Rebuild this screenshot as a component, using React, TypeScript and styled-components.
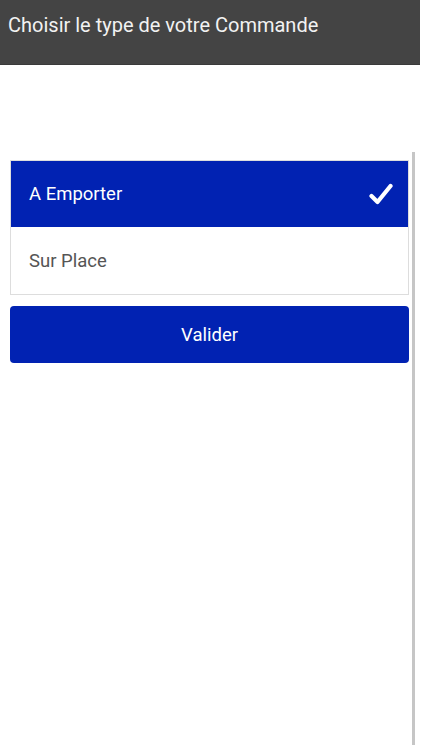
import React, { useState } from "react";
import styled, { createGlobalStyle } from "styled-components";

const GlobalStyle = createGlobalStyle`
  html, body {
    margin: 0;
    padding: 0;
    background: #ffffff;
  }
  body {
    font-family: Roboto, "Noto Sans", "Liberation Sans", sans-serif;
  }
`;

const Page = styled.div`
  width: 420px;
  height: 750px;
  background: #ffffff;
  display: flex;
  flex-direction: column;
`;

const Header = styled.header`
  height: 65px;
  background: #444444;
  display: flex;
  align-items: flex-start;
  padding: 12px 0 0 8px;
  box-sizing: border-box;
  border-bottom: 1px solid #3a3a3a;
`;

const Title = styled.h1`
  margin: 0;
  font-size: 20px;
  font-weight: 400;
  color: #f2f2f2;
  line-height: 26px;
`;

const Body = styled.div`
  margin-top: 87px;
  height: 593px;
  display: flex;
`;

const Content = styled.div`
  width: 410px;
  padding: 8px 0 0 10px;
  box-sizing: border-box;
  display: flex;
  flex-direction: column;
  gap: 11px;
`;

const ScrollBar = styled.div`
  width: 3px;
  margin-left: 2px;
  background: #c6c6c6;
`;

const List = styled.ul`
  list-style: none;
  margin: 0;
  padding: 0;
  border: 1px solid #dddddd;
  width: 399px;
  box-sizing: border-box;
`;

const Item = styled.li<{ $selected: boolean }>`
  height: 66px;
  display: flex;
  align-items: center;
  justify-content: space-between;
  padding: 0 15px 0 18px;
  font-size: 18.5px;
  color: ${(p) => (p.$selected ? "#ffffff" : "#555555")};
  background: ${(p) => (p.$selected ? "#0122b2" : "#ffffff")};
  cursor: pointer;

  & + & {
    height: 67px;
  }
`;

const Check = styled.svg`
  width: 24px;
  height: 22px;
`;

const Button = styled.button`
  width: 399px;
  height: 57px;
  border: none;
  border-radius: 4px;
  background: #0122b2;
  color: #ffffff;
  font-family: inherit;
  font-size: 18.5px;
  cursor: pointer;
`;

const options = ["A Emporter", "Sur Place"];

export default function App() {
  const [selected, setSelected] = useState(0);
  return (
    <>
      <GlobalStyle />
      <Page>
        <Header>
          <Title>Choisir le type de votre Commande</Title>
        </Header>
        <Body>
          <Content>
            <List>
              {options.map((label, i) => (
                <Item
                  key={label}
                  $selected={selected === i}
                  onClick={() => setSelected(i)}
                >
                  {label}
                  {selected === i && (
                    <Check viewBox="0 0 24 22">
                      <path
                        d="M2.5 13 L8.5 19 L21.5 3"
                        fill="none"
                        stroke="#ffffff"
                        strokeWidth="4.2"
                        strokeLinecap="round"
                        strokeLinejoin="round"
                      />
                    </Check>
                  )}
                </Item>
              ))}
            </List>
            <Button>Valider</Button>
          </Content>
          <ScrollBar />
        </Body>
      </Page>
    </>
  );
}
